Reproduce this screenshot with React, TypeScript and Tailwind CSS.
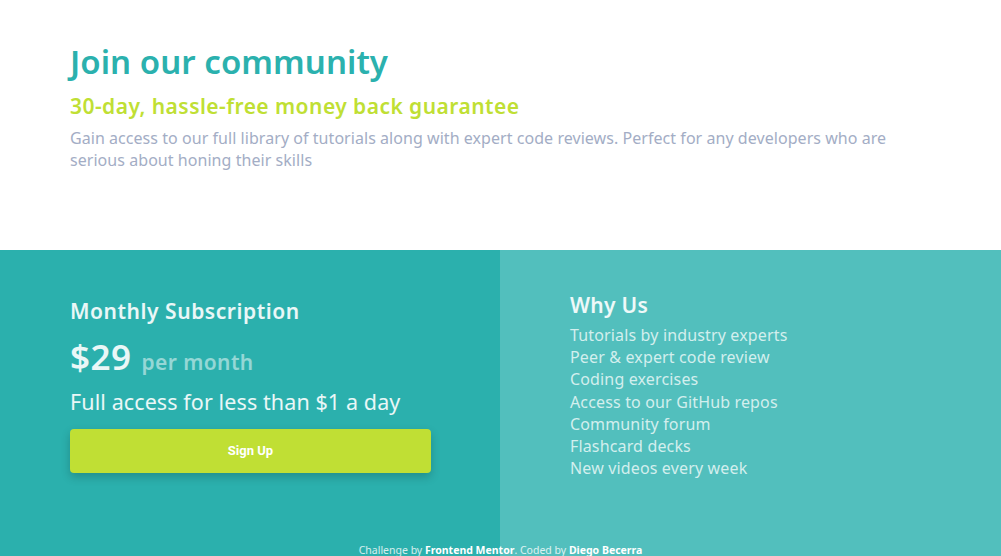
const features = [
  'Tutorials by industry experts',
  'Peer & expert code review',
  'Coding exercises',
  'Access to our GitHub repos',
  'Community forum',
  'Flashcard decks',
  'New videos every week',
]

export default function App() {
  return (
    <div className="min-h-screen bg-white font-['Noto_Sans',sans-serif]">
      {/* ── Intro ── */}
      <section className="h-[250px] px-[70px] pt-[40px]">
        <h1 className="text-[33px] leading-[44px] font-semibold tracking-[0.05px] text-[#2bb1ae]">Join our community</h1>
        <h2 className="mt-[8px] text-[21px] leading-[28px] font-semibold tracking-[0.45px] text-[#c0df34]">
          30-day, hassle-free money back guarantee
        </h2>
        <p className="mt-[7px] text-[16px] leading-[22px] tracking-[0.05px] text-[#a3adc5]">
          Gain access to our full library of tutorials along with expert code reviews. Perfect for any developers who are
          serious about honing their skills
        </p>
      </section>

      {/* ── Pricing ── */}
      <section className="relative flex h-[316px]">
        <div className="w-[500px] bg-[#2bb0ad] px-[70px] pt-[45px]">
          <h3 className="text-[21px] leading-[32px] font-semibold tracking-[0.55px] text-white/90">Monthly Subscription</h3>
          <div className="mt-[9px] flex items-baseline gap-[10px]">
            <span className="text-[35px] leading-[42px] font-semibold tracking-[0.5px] text-white/90">$29</span>
            <span className="text-[21px] font-semibold tracking-[0.4px] text-white/50">per month</span>
          </div>
          <p className="mt-[7px] text-[21.5px] leading-[32px] tracking-[0.1px] text-white/90">
            Full access for less than $1 a day
          </p>
          <button className="mt-[11px] h-[44px] w-[361px] rounded-[4px] bg-[#c0df34] font-['Roboto',sans-serif] text-[13px] font-bold text-white shadow-[0_4px_10px_rgba(0,0,0,0.2)]">
            Sign Up
          </button>
        </div>
        <div className="flex-1 bg-[#52bfbd] px-[70px] pt-[40px]">
          <h3 className="text-[21px] leading-[30px] font-semibold tracking-[0.3px] text-white/90">Why Us</h3>
          <ul className="mt-[4px] text-[16px] leading-[22.2px] tracking-[0.15px] text-white/75">
            {features.map((f) => (
              <li key={f}>{f}</li>
            ))}
          </ul>
        </div>

        {/* Attribution */}
        <p className="absolute bottom-[6px] left-0 right-0 text-center text-[10.5px] leading-[20px] text-white/80">
          Challenge by <span className="font-bold text-white">Frontend Mentor</span>. Coded by{' '}
          <span className="font-bold text-white">Diego Becerra</span>
        </p>
      </section>
    </div>
  )
}
